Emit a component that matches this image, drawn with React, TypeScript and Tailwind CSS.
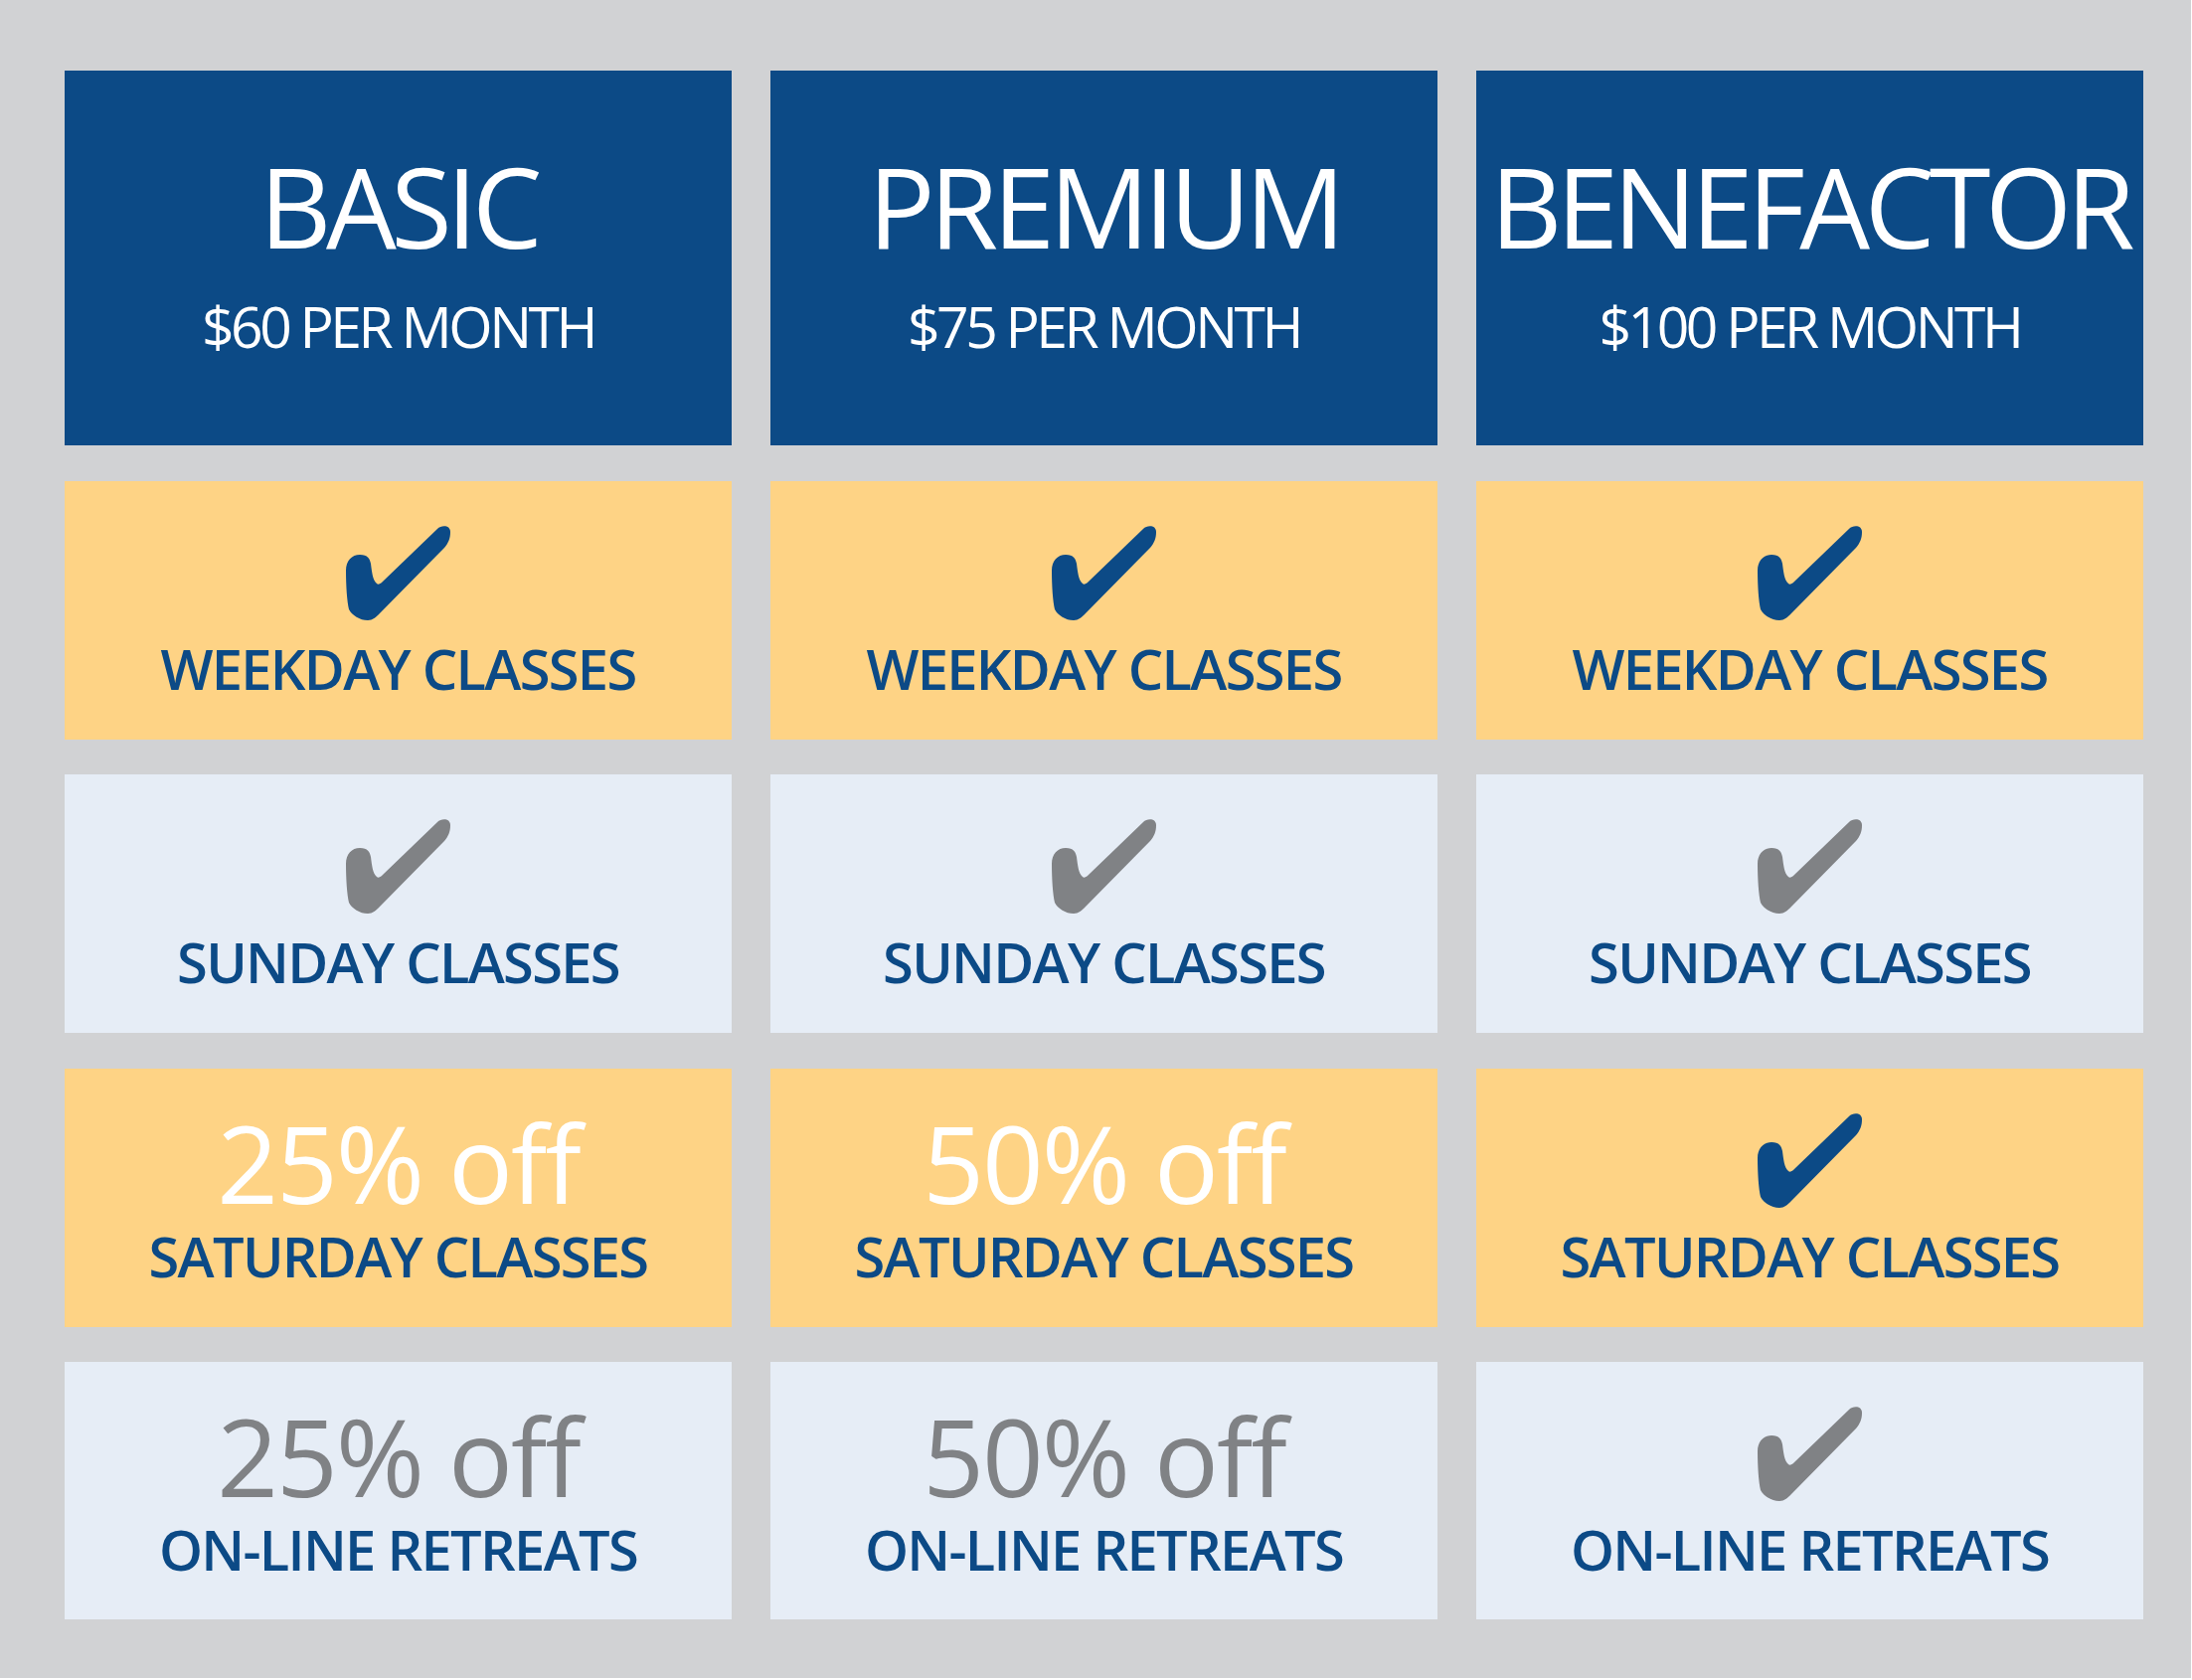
import React from "react";

const font = { fontFamily: '"Open Sans", "Noto Sans", sans-serif' };

function Check({ color }: { color: string }) {
  return (
    <svg width="105" height="95" viewBox="0 0 105 95" fill={color}>
      <path d="M22 95 C14 95 6 90 3 84 C1 76 0 60 0 45 C0 35 6 29 14 29 C22 29 24 33 25 38 C26 46 27 55 31 58 C33 60 36 57 38 55 L92 3 C96 -1 105 -1 105 6 C105 13 103 17 99 22 L34 88 C30 92 27 95 22 95 Z" />
    </svg>
  );
}

type Cell =
  | { kind: "check"; color: string }
  | { kind: "text"; text: string; color: string };

function FeatureCell({ bg, top, label }: { bg: string; top: Cell; label: string }) {
  return (
    <div className={`flex flex-col items-center pt-[45px] ${bg}`}>
      <div className="h-[95px] flex justify-center">
        {top.kind === "check" ? (
          <Check color={top.color} />
        ) : (
          <div
            className={`mt-[-4px] text-[108px] leading-none tracking-[-2px] ${top.color}`}
            style={font}
          >
            {top.text}
          </div>
        )}
      </div>
      <div
        className="mt-[20px] text-[56px] leading-none font-semibold text-[#0c4a86] tracking-[-1.7px]"
        style={font}
      >
        {label}
      </div>
    </div>
  );
}

const plans = [
  { name: "BASIC", price: "$60 PER MONTH", disc: "25% off" },
  { name: "PREMIUM", price: "$75 PER MONTH", disc: "50% off" },
  { name: "BENEFACTOR", price: "$100 PER MONTH", disc: null as string | null },
];

const BLUE = "#0c4a86";
const GRAY = "#808285";

export default function App() {
  return (
    <div className="w-[2205px] h-[1690px] bg-white">
      <div className="w-[2204px] h-[1688px] bg-[#d1d2d4] pl-[65px] pt-[71px]">
        <div className="grid grid-cols-[671px_671px_671px] grid-rows-[377px_260px_260px_260px_259px] gap-x-[39px] gap-y-[35.5px]">
          {plans.map((p) => (
            <div key={p.name} className="bg-[#0c4a86] flex flex-col items-center pt-[80px] text-white" style={font}>
              <div className="text-[112px] leading-none tracking-[-5.5px]">{p.name}</div>
              <div className="mt-[37px] text-[57px] leading-none tracking-[-3.5px]">{p.price}</div>
            </div>
          ))}
          {plans.map((p) => (
            <FeatureCell key={p.name + "w"} bg="bg-[#fed385]" top={{ kind: "check", color: BLUE }} label="WEEKDAY CLASSES" />
          ))}
          {plans.map((p) => (
            <FeatureCell key={p.name + "s"} bg="bg-[#e6edf6]" top={{ kind: "check", color: GRAY }} label="SUNDAY CLASSES" />
          ))}
          {plans.map((p) => (
            <FeatureCell
              key={p.name + "sa"}
              bg="bg-[#fed385]"
              top={p.disc ? { kind: "text", text: p.disc, color: "text-white" } : { kind: "check", color: BLUE }}
              label="SATURDAY CLASSES"
            />
          ))}
          {plans.map((p) => (
            <FeatureCell
              key={p.name + "o"}
              bg="bg-[#e6edf6]"
              top={p.disc ? { kind: "text", text: p.disc, color: "text-[#808285]" } : { kind: "check", color: GRAY }}
              label="ON-LINE RETREATS"
            />
          ))}
        </div>
      </div>
    </div>
  );
}
